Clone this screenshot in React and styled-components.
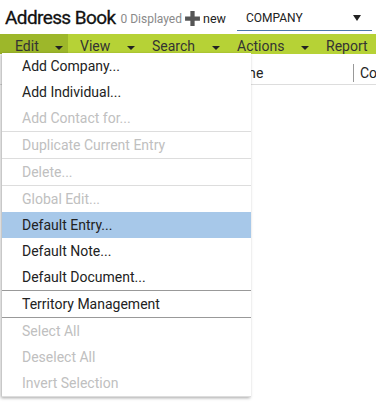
import React from "react";
import styled, { createGlobalStyle } from "styled-components";

const Global = createGlobalStyle`
  body {
    margin: 0;
    font-family: Roboto, "Liberation Sans", sans-serif;
    background: #fff;
    overflow: hidden;
  }
`;

const Page = styled.div`
  position: relative;
  width: 376px;
  height: 403px;
  overflow: hidden;
  white-space: nowrap;
`;

const Header = styled.div`
  display: flex;
  align-items: center;
  height: 34px;
  padding-left: 5px;
  & > * {
    flex-shrink: 0;
  }
`;

const Title = styled.h1`
  margin: 0;
  font-size: 19px;
  font-weight: 400;
  color: #111;
  letter-spacing: -0.6px;
  margin-top: 1px;
  -webkit-text-stroke: 0.3px #111;
`;

const Count = styled.span`
  margin-left: 5px;
  font-size: 12px;
  color: #8a8a8a;
  margin-top: 3px;
`;

const NewBtn = styled.span`
  display: flex;
  align-items: center;
  gap: 2px;
  margin-left: 2px;
  font-size: 12.5px;
  color: #222;
  margin-top: 3px;
`;

const Select = styled.div`
  display: flex;
  align-items: center;
  justify-content: space-between;
  margin-left: 11px;
  width: 135px;
  height: 26px;
  box-sizing: border-box;
  padding: 0 11px 0 9px;
  border-bottom: 1px solid #4a76a8;
  font-size: 12px;
  color: #222;
  margin-top: 2px;
`;

const MenuBar = styled.div`
  display: flex;
  height: 20px;
  background: #b6d236;
`;

const MenuTab = styled.div`
  display: flex;
  align-items: center;
  justify-content: space-between;
  width: ${(p) => p.w}px;
  flex-shrink: 0;
  box-sizing: border-box;
  padding: 3px 5px 0 ${(p) => p.pl || 12}px;
  background: ${(p) => (p.active ? "#9db72a" : "transparent")};
  font-size: 14px;
  color: #333;
`;

const Caret = styled.span`
  width: 0;
  height: 0;
  border-left: ${(p) => p.size || 4}px solid transparent;
  border-right: ${(p) => p.size || 4}px solid transparent;
  border-top: ${(p) => p.h || p.size || 4}px solid #222;
  margin-top: ${(p) => p.top || 4}px;
`;

const GridHead = styled.div`
  display: flex;
  align-items: flex-end;
  height: 31px;
  padding-bottom: 2px;
  box-sizing: border-box;
  border-bottom: 1px solid #ddd;
  font-size: 14px;
  color: #222;
  padding-left: 226px;
`;

const Col = styled.div`
  width: ${(p) => p.w}px;
  flex-shrink: 0;
  padding-left: ${(p) => p.pl || 0}px;
  box-sizing: border-box;
  border-right: ${(p) => (p.divider ? "1px solid #999" : "none")};
  line-height: 18px;
`;

const Dropdown = styled.div`
  position: absolute;
  left: 2px;
  top: 53px;
  width: 249px;
  background: #fff;
  box-shadow: -1px 1px 3px rgba(0, 0, 0, 0.35);
`;

const Item = styled.div`
  height: 26px;
  display: flex;
  align-items: center;
  padding-left: 20px;
  font-size: 14px;
  color: ${(p) => (p.disabled ? "#c0c0c0" : "#222")};
  background: ${(p) => (p.selected ? "#a7c8e9" : "transparent")};
  border-bottom: ${(p) => (p.sep ? `1px solid ${p.sep}` : "none")};
`;

const PlusIcon = () => (
  <svg width="17" height="17" viewBox="0 0 16 16">
    <path d="M6 1h4v5h5v4h-5v5H6v-5H1V6h5z" fill="#555" />
  </svg>
);

const items = [
  { label: "Add Company..." },
  { label: "Add Individual..." },
  { label: "Add Contact for...", disabled: true, sep: "#ddd" },
  { label: "Duplicate Current Entry", disabled: true, sep: "#ddd" },
  { label: "Delete...", disabled: true, sep: "#ddd" },
  { label: "Global Edit...", disabled: true },
  { label: "Default Entry...", selected: true },
  { label: "Default Note..." },
  { label: "Default Document...", sep: "#999" },
  { label: "Territory Management", sep: "#999" },
  { label: "Select All", disabled: true },
  { label: "Deselect All", disabled: true },
  { label: "Invert Selection", disabled: true, sep: "#ddd" },
];

export default function App() {
  return (
    <Page>
      <Global />
      <Header>
        <Title>Address Book</Title>
        <Count>0 Displayed</Count>
        <NewBtn>
          <PlusIcon />
          new
        </NewBtn>
        <Select>
          <span>COMPANY</span>
          <Caret size={4} h={6} top={1} />
        </Select>
      </Header>
      <MenuBar>
        <MenuTab active w={68} pl={15}>
          Edit <Caret />
        </MenuTab>
        <MenuTab w={72}>
          View <Caret />
        </MenuTab>
        <MenuTab w={85}>
          Search <Caret />
        </MenuTab>
        <MenuTab w={89}>
          Actions <Caret />
        </MenuTab>
        <MenuTab w={70}>Report</MenuTab>
      </MenuBar>
      <GridHead>
        <Col w={128} divider>
          Name
        </Col>
        <Col w={60} pl={6}>
          Company
        </Col>
      </GridHead>
      <Dropdown>
        {items.map((it) => (
          <Item
            key={it.label}
            disabled={it.disabled}
            selected={it.selected}
            sep={it.sep}
          >
            {it.label}
          </Item>
        ))}
      </Dropdown>
    </Page>
  );
}
